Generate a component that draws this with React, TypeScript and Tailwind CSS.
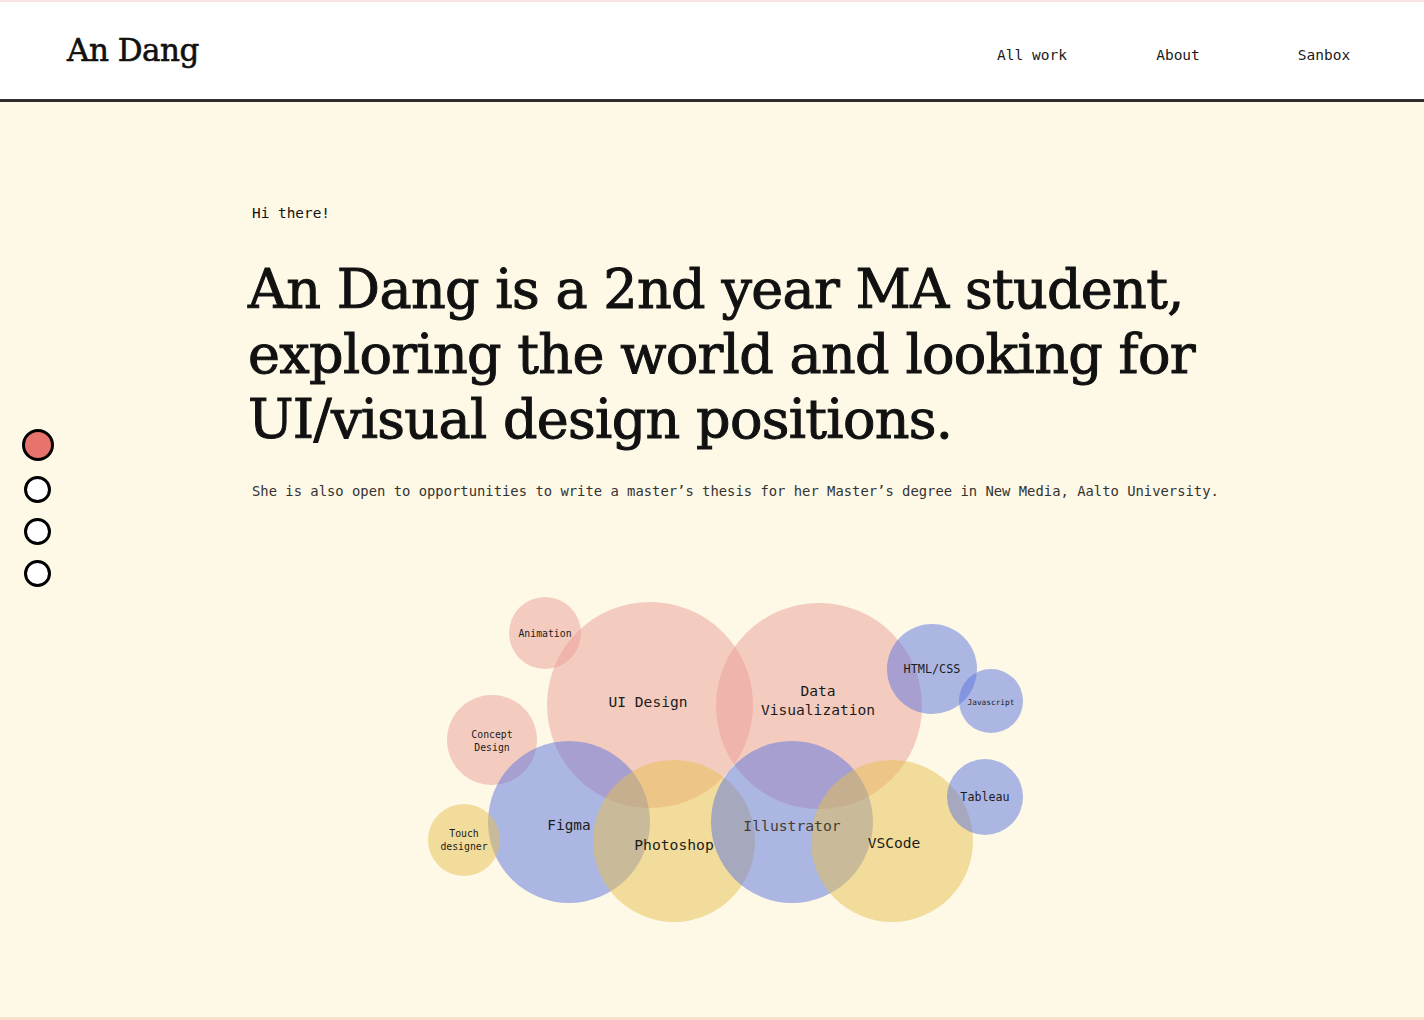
import React from "react"

const mono = "font-['DejaVu_Sans_Mono',monospace]"
const slab = "font-['DejaVu_Serif',serif]"

const PINK = "#e99e97"
const BLUE = "#5974df"
const YELLOW = "#e5c04f"

// chart origin is at page (425, 595)
const bubbles = [
  { cx: 120, cy: 37, r: 36, c: PINK },
  { cx: 225, cy: 109, r: 103, c: PINK },
  { cx: 394, cy: 110, r: 103, c: PINK },
  { cx: 507, cy: 73, r: 45, c: BLUE },
  { cx: 566, cy: 105, r: 32, c: BLUE },
  { cx: 67, cy: 144, r: 45, c: PINK },
  { cx: 144, cy: 226, r: 81, c: BLUE },
  { cx: 249, cy: 245, r: 81, c: YELLOW },
  { cx: 367, cy: 226, r: 81, c: BLUE },
  { cx: 467, cy: 245, r: 81, c: YELLOW },
  { cx: 560, cy: 201, r: 38, c: BLUE },
  { cx: 39, cy: 244, r: 36, c: YELLOW },
]

const labels = [
  { x: 120, y: 37, s: 9.8, t: "Animation" },
  { x: 223, y: 105, s: 14.6, t: "UI Design" },
  { x: 393, y: 94, s: 14.6, t: "Data" },
  { x: 393, y: 113, s: 14.6, t: "Visualization" },
  { x: 507, y: 73, s: 11.8, t: "HTML/CSS" },
  { x: 566, y: 106, s: 7.8, t: "Javascript" },
  { x: 67, y: 138, s: 9.8, t: "Concept" },
  { x: 67, y: 151, s: 9.8, t: "Design" },
  { x: 144, y: 229, s: 14.4, t: "Figma" },
  { x: 249, y: 248, s: 14.7, t: "Photoshop" },
  { x: 367, y: 229, s: 14.7, t: "Illustrator", dim: true },
  { x: 469, y: 246, s: 14.6, t: "VSCode" },
  { x: 560, y: 201, s: 11.7, t: "Tableau" },
  { x: 39, y: 237, s: 9.8, t: "Touch" },
  { x: 39, y: 250, s: 9.8, t: "designer" },
]

const SkillBubbles = () => (
  <svg width="600" height="330" viewBox="0 0 600 330" className="block">
    {bubbles.map((b, i) => (
      <circle key={i} cx={b.cx} cy={b.cy} r={b.r} fill={b.c} fillOpacity={0.5} />
    ))}
    {labels.map((l, i) => (
      <text
        key={i}
        x={l.x}
        y={l.y}
        fontSize={l.s}
        textAnchor="middle"
        dominantBaseline="central"
        fill={l.dim ? "#463c2b" : "#1c1c1c"}
        fontFamily="'DejaVu Sans Mono', monospace"
      >
        {l.t}
      </text>
    ))}
  </svg>
)

const App = () => {
  return (
    <div className="min-h-screen bg-[#fef8e6] text-[#111]">
      {/* Header */}
      <header className="h-[102px] bg-white border-t-2 border-[#fbe2e5] border-b-[3px] border-b-[#2e2e2e] flex items-center justify-between pl-[67px] pr-[27px]">
        <div className={`${slab} text-[31px] tracking-[-0.5px] leading-none -mt-[1px] [-webkit-text-stroke:0.6px_#111]`}>An Dang</div>
        <nav className={`${mono} text-[14.5px] flex mt-[10px] text-[#1a1a1a]`}>
          <a className="w-[146px] text-center">All work</a>
          <a className="w-[146px] text-center">About</a>
          <a className="w-[146px] text-center">Sanbox</a>
        </nav>
      </header>

      <main className="relative h-[918px] border-b-[3px] border-[#f8dfcb]">
        {/* Section pager */}
        <div className="absolute left-[22px] top-[327px] flex flex-col items-center">
          <span className="w-[32px] h-[32px] rounded-full bg-[#e8736c] border-[3px] border-black" />
          <span className="mt-[15px] w-[27px] h-[27px] rounded-full bg-white border-[3px] border-black -ml-[1px]" />
          <span className="mt-[15px] w-[27px] h-[27px] rounded-full bg-white border-[3px] border-black -ml-[1px]" />
          <span className="mt-[15px] w-[27px] h-[27px] rounded-full bg-white border-[3px] border-black -ml-[1px]" />
        </div>

        <div className="pl-[248px] pt-[101px]">
          <p className={`${mono} text-[14.4px] pl-[4px]`}>Hi there!</p>
          <h1 className={`${slab} mt-[32px] text-[54px] leading-[65px] tracking-[-0.7px] [-webkit-text-stroke:1px_#111]`}>
            An Dang is a 2nd year MA student,
            <br />
            exploring the world and looking for
            <br />
            UI/visual design positions.
          </h1>
          <p className={`${mono} mt-[29px] pl-[4px] text-[13.85px] text-[#333] whitespace-nowrap`}>
            She is also open to opportunities to write a master’s thesis for her Master’s degree in New Media, Aalto University.
          </p>
        </div>

        <div className="pl-[425px] mt-[95px]">
          <SkillBubbles />
        </div>
      </main>
    </div>
  )
}

export default App
